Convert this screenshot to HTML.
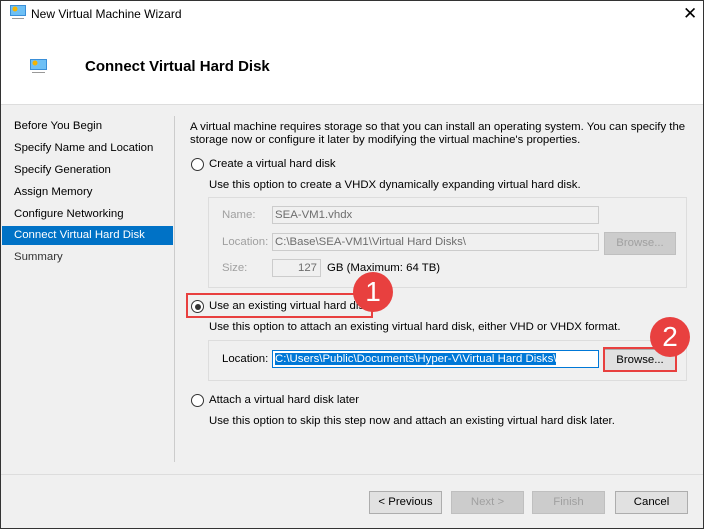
<!DOCTYPE html><html><head><style>
body{margin:0;width:704px;height:529px;overflow:hidden;font-family:"Liberation Sans",sans-serif;font-size:11.4px;color:#000;background:#fff;position:relative}
.a{position:absolute;white-space:nowrap}
.win{position:absolute;left:0;top:0;width:702px;height:527px;border:1px solid #333;background:#f0f0f0}
.g{color:#a0a0a0}
.inp{position:absolute;height:18px;border:1px solid #ccc;background:#f0f0f0;box-sizing:border-box;line-height:16px;padding-left:2px;color:#6d6d6d}
.btn{position:absolute;height:23px;border:1px solid #adadad;background:#e1e1e1;box-sizing:border-box;text-align:center;line-height:21px}
.rad{position:absolute;width:13px;height:13px;border:1px solid #333;border-radius:50%;box-sizing:border-box;background:#fff}
.circ{position:absolute;width:40px;height:40px;border-radius:50%;background:#e8403f;color:#fff;font-size:28px;text-align:center;line-height:40px}
</style></head><body>
<div class="win">
<div class="a" style="left:0;top:0;width:702px;height:103px;background:#fff;border-bottom:1px solid #ddd"></div>
<svg class="a" style="left:9px;top:4px" width="16" height="15"><rect x="0" y="0" width="16" height="11" fill="#3a8fd8"/><rect x="1" y="1" width="14" height="9" fill="#6ec0f5"/><circle cx="5" cy="4" r="2.5" fill="#f5b400"/><rect x="2" y="13" width="12" height="1" fill="#999"/></svg>
<div class="a" style="left:30px;top:6px;font-size:12px">New Virtual Machine Wizard</div>
<div class="a" style="left:682px;top:3px;font-size:17px;font-weight:300">✕</div>
<svg class="a" style="left:29px;top:58px" width="17" height="15"><rect x="0" y="0" width="17" height="11" fill="#3a8fd8"/><rect x="1" y="1" width="15" height="9" fill="#6ec0f5"/><circle cx="5" cy="4" r="2.5" fill="#f5b400"/><rect x="2" y="13" width="13" height="1" fill="#999"/></svg>
<div class="a" style="left:84px;top:57px;font-size:15px;font-weight:bold">Connect Virtual Hard Disk</div>

<div class="a" style="left:13px;top:119px">Before You Begin</div>
<div class="a" style="left:13px;top:141px">Specify Name and Location</div>
<div class="a" style="left:13px;top:163px">Specify Generation</div>
<div class="a" style="left:13px;top:185px">Assign Memory</div>
<div class="a" style="left:13px;top:207px">Configure Networking</div>
<div class="a" style="left:1px;top:225px;width:171px;height:19px;background:#0072c6"></div>
<div class="a" style="left:13px;top:228px;color:#fff">Connect Virtual Hard Disk</div>
<div class="a" style="left:13px;top:250px;color:#333">Summary</div>
<div class="a" style="left:173px;top:115px;width:1px;height:346px;background:#ccc"></div>

<div class="a" style="left:189px;top:120px;line-height:13px">A virtual machine requires storage so that you can install an operating system. You can specify the<br>storage now or configure it later by modifying the virtual machine's properties.</div>
<div class="rad" style="left:190px;top:157px"></div>
<div class="a" style="left:208px;top:157px">Create a virtual hard disk</div>
<div class="a" style="left:208px;top:178px">Use this option to create a VHDX dynamically expanding virtual hard disk.</div>
<div class="a" style="left:207px;top:196px;width:479px;height:91px;border:1px solid #ddd;box-sizing:border-box"></div>
<div class="a g" style="left:221px;top:208px">Name:</div>
<div class="inp" style="left:271px;top:205px;width:327px">SEA-VM1.vhdx</div>
<div class="a g" style="left:221px;top:235px">Location:</div>
<div class="inp" style="left:271px;top:232px;width:327px">C:\Base\SEA-VM1\Virtual Hard Disks\</div>
<div class="btn" style="left:603px;top:231px;width:72px;color:#a0a0a0;background:#ccc;border-color:#bfbfbf">Browse...</div>
<div class="a g" style="left:221px;top:261px">Size:</div>
<div class="inp" style="left:271px;top:258px;width:49px;text-align:right;padding-right:3px">127</div>
<div class="a" style="left:326px;top:261px">GB (Maximum: 64 TB)</div>

<div class="rad" style="left:190px;top:299px"></div><div class="a" style="left:193.5px;top:302.5px;width:6px;height:6px;border-radius:50%;background:#333"></div>
<div class="a" style="left:208px;top:299px">Use an existing virtual hard disk</div>
<div class="a" style="left:185px;top:292px;width:187px;height:25px;border:2px solid #e8403f;box-sizing:border-box"></div>
<div class="a" style="left:208px;top:320px">Use this option to attach an existing virtual hard disk, either VHD or VHDX format.</div>
<div class="a" style="left:207px;top:339px;width:479px;height:41px;border:1px solid #ddd;box-sizing:border-box"></div>
<div class="a" style="left:221px;top:352px">Location:</div>
<div class="inp" style="left:271px;top:349px;width:327px;background:#fff;border-color:#0078d7;padding-left:2px"><span style="background:#0078d7;color:#fff">C:\Users\Public\Documents\Hyper-V\Virtual Hard Disks\</span></div>
<div class="btn" style="left:603px;top:348px;width:72px">Browse...</div>
<div class="a" style="left:602px;top:346px;width:74px;height:25px;border:2px solid #e8403f;box-sizing:border-box"></div>
<div class="circ" style="left:352px;top:271px">1</div>
<div class="circ" style="left:649px;top:316px">2</div>

<div class="rad" style="left:190px;top:393px"></div>
<div class="a" style="left:208px;top:393px">Attach a virtual hard disk later</div>
<div class="a" style="left:208px;top:414px">Use this option to skip this step now and attach an existing virtual hard disk later.</div>

<div class="a" style="left:0;top:473px;width:702px;height:1px;background:#ddd"></div>
<div class="btn" style="left:368px;top:490px;width:73px">&lt; Previous</div>
<div class="btn" style="left:450px;top:490px;width:73px;color:#a0a0a0;background:#ccc;border-color:#bfbfbf">Next &gt;</div>
<div class="btn" style="left:531px;top:490px;width:73px;color:#a0a0a0;background:#ccc;border-color:#bfbfbf">Finish</div>
<div class="btn" style="left:614px;top:490px;width:73px">Cancel</div>
</div>
</body></html>
